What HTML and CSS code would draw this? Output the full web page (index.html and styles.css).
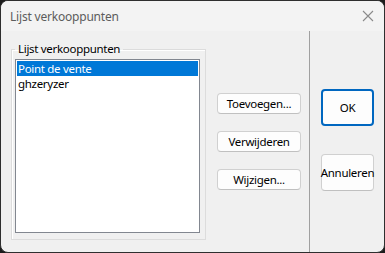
FILE: index.html
```html
<!DOCTYPE html>
<html>
<head>
<meta charset="utf-8">
<link rel="stylesheet" href="styles.css">
</head>
<body>
<div class="window">
  <div class="titlebar">
    <span class="title">Lijst verkooppunten</span>
    <svg class="close" width="12" height="12" viewBox="0 0 12 12"><path d="M1 1 L11 11 M11 1 L1 11" stroke="#8a8a8a" stroke-width="1.1" fill="none"/></svg>
  </div>
  <div class="content">
    <div class="leftpane">
      <fieldset class="group">
        <legend>Lijst verkooppunten</legend>
        <div class="listbox">
          <div class="item selected">Point de vente</div>
          <div class="item">ghzeryzer</div>
        </div>
      </fieldset>
      <div class="actions">
        <button class="btn">Toevoegen...</button>
        <button class="btn">Verwijderen</button>
        <button class="btn">Wijzigen...</button>
      </div>
    </div>
    <div class="rightpane">
      <button class="btn big default">OK</button>
      <button class="btn big">Annuleren</button>
    </div>
  </div>
</div>
</body>
</html>
```
FILE: styles.css
```css
html, body {
  margin: 0;
  padding: 0;
  background: #1c1c1c;
}
body {
  width: 385px;
  height: 253px;
  font-family: "Noto Sans", "Open Sans", sans-serif;
  font-size: 11.5px;
  letter-spacing: -0.3px;
}
.window {
  box-sizing: border-box;
  width: 385px;
  height: 253px;
  border: 1px solid #2e2e2e;
  border-radius: 8px;
  background: #f0f0f0;
  overflow: hidden;
  display: flex;
  flex-direction: column;
}
.titlebar {
  height: 30px;
  flex: none;
  background: #f3f3f3;
  display: flex;
  align-items: center;
  justify-content: space-between;
  padding: 0 10px 0 9px;
}
.title {
  color: #5c5c5c;
  font-size: 12px;
  letter-spacing: -0.2px;
}
.content {
  flex: 1;
  display: flex;
}
.leftpane {
  width: 309px;
  flex: none;
  display: flex;
  align-items: flex-start;
  padding: 10px 0 0 10px;
  box-sizing: border-box;
  border-right: 1px solid #a0a0a0;
}
.group {
  margin: 0;
  padding: 2px 5px 6px 3px;
  border: 1px solid #dcdcdc;
  box-shadow: inset 1px 1px 0 #ffffff;
  border-radius: 0;
}
.group legend {
  padding: 0 3px;
  line-height: 16px;
  color: #000;
}
.listbox {
  box-sizing: border-box;
  width: 185px;
  height: 174px;
  background: #fff;
  border: 1px solid #828790;
  padding: 1px;
}
.item {
  height: 15px;
  line-height: 15px;
  padding-left: 1px;
  color: #000;
  overflow: hidden;
}
.item.selected {
  background: #0078d7;
  color: #fff;
}
.actions {
  display: flex;
  flex-direction: column;
  gap: 17px;
  margin: 52px 0 0 11px;
}
.btn {
  box-sizing: border-box;
  width: 84px;
  height: 21px;
  padding: 0;
  font-family: inherit;
  font-size: 11.5px;
  letter-spacing: -0.3px;
  color: #000;
  background: #fdfdfd;
  border: 1px solid #d0d0d0;
  border-bottom-color: #c0c0c0;
  border-radius: 4px;
  white-space: nowrap;
  overflow: visible;
  display: flex;
  align-items: center;
  justify-content: center;
}
.rightpane {
  flex: 1;
  display: flex;
  flex-direction: column;
  align-items: flex-start;
  gap: 28px;
  padding: 58px 0 0 11px;
}
.btn.big {
  width: 53px;
  height: 37px;
}
.btn.default {
  border: 2px solid #0067c0;
}
```
